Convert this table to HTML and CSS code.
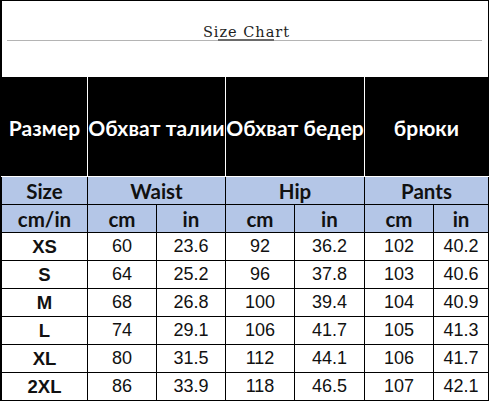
FILE: index.html
```html
<!DOCTYPE html>
<html>
<head>
<meta charset="utf-8">
<link rel="stylesheet" href="styles.css">
</head>
<body>
<div class="frame">
  <div class="title-area">
    <div class="title-line">
      <span class="title">Size Chart</span>
      <span class="accent"></span>
    </div>
  </div>
  <table class="chart">
    <colgroup>
      <col class="c-size"><col class="c-val"><col class="c-val"><col class="c-val"><col class="c-val2"><col class="c-val"><col class="c-last">
    </colgroup>
    <tr class="ru">
      <td>Размер</td>
      <td colspan="2">Обхват талии</td>
      <td colspan="2">Обхват бедер</td>
      <td colspan="2">брюки</td>
    </tr>
    <tr class="en">
      <td>Size</td>
      <td colspan="2">Waist</td>
      <td colspan="2">Hip</td>
      <td colspan="2">Pants</td>
    </tr>
    <tr class="en">
      <td>cm/in</td><td>cm</td><td>in</td><td>cm</td><td>in</td><td>cm</td><td>in</td>
    </tr>
    <tr class="row"><td class="sz">XS</td><td>60</td><td>23.6</td><td>92</td><td>36.2</td><td>102</td><td>40.2</td></tr>
    <tr class="row"><td class="sz">S</td><td>64</td><td>25.2</td><td>96</td><td>37.8</td><td>103</td><td>40.6</td></tr>
    <tr class="row"><td class="sz">M</td><td>68</td><td>26.8</td><td>100</td><td>39.4</td><td>104</td><td>40.9</td></tr>
    <tr class="row"><td class="sz">L</td><td>74</td><td>29.1</td><td>106</td><td>41.7</td><td>105</td><td>41.3</td></tr>
    <tr class="row"><td class="sz">XL</td><td>80</td><td>31.5</td><td>112</td><td>44.1</td><td>106</td><td>41.7</td></tr>
    <tr class="row"><td class="sz">2XL</td><td>86</td><td>33.9</td><td>118</td><td>46.5</td><td>107</td><td>42.1</td></tr>
  </table>
</div>
</body>
</html>
```
FILE: styles.css
```css
html, body {
  margin: 0;
  padding: 0;
  background: #fff;
}

.frame {
  width: 486px;
  border-left: 2px solid #000;
  border-right: 1px solid #000;
  border-top: 1px solid #000;
  box-sizing: content-box;
}

.title-area {
  height: 76px;
  padding-top: 23px;
  box-sizing: border-box;
}

.title-line {
  margin: 0 6px 0 5px;
  border-bottom: 1px solid #b4b4b4;
  display: flex;
  justify-content: center;
  position: relative;
  height: 16px;
}

.title {
  font-family: "DejaVu Serif", "Liberation Serif", serif;
  font-size: 14.5px;
  letter-spacing: 1px;
  color: #1e1e1e;
  line-height: 16px;
  margin-left: 4px;
}

.accent {
  position: absolute;
  left: 211px;
  width: 56px;
  bottom: -1px;
  height: 2px;
  background: #6a6a6a;
}

.chart {
  border-collapse: collapse;
  table-layout: fixed;
  width: 487px;
  margin-left: -1px;
}

.c-size { width: 86px; }
.c-val { width: 69px; }
.c-val2 { width: 70px; }
.c-last { width: 55px; }

.chart td {
  border: 1px solid #000;
  padding: 0;
  text-align: center;
  white-space: nowrap;
  overflow: visible;
}

.ru td {
  background: #000;
  color: #fff;
  height: 98px;
  border-color: #fff;
  border-top-color: #000;
  font-family: "Lato", "Open Sans", sans-serif;
  font-weight: 700;
  font-size: 21px;
  letter-spacing: 0.1px;
}

.ru td:first-child { border-left-color: #000; }
.ru td:last-child { border-right-color: #000; }

.en td {
  background: #b4c6e7;
  color: #111;
  height: 27px;
  font-family: "Lato", "Open Sans", sans-serif;
  font-weight: 700;
  font-size: 20.5px;
}

.row td {
  height: 27px;
  color: #111;
  font-family: "Liberation Sans", Arial, sans-serif;
  font-size: 18px;
}

.row td.sz {
  font-weight: 700;
  font-size: 18.5px;
}
```
